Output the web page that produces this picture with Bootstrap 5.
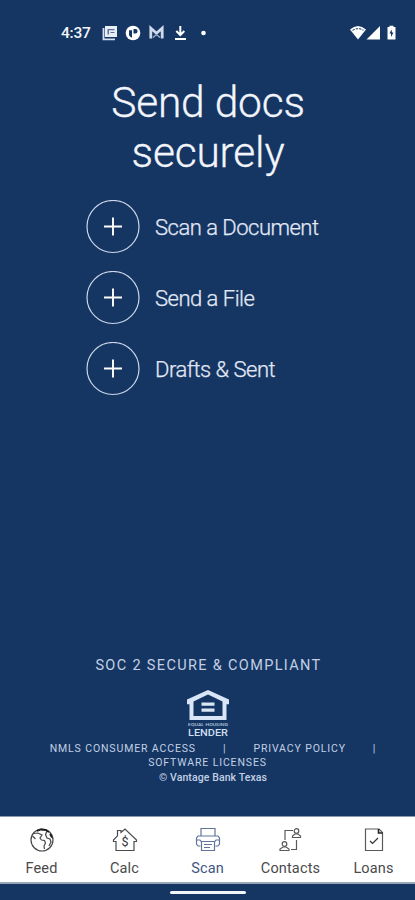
<!DOCTYPE html>
<html lang="en">
<head>
<meta charset="utf-8">
<meta name="viewport" content="width=device-width, initial-scale=1">
<title>Send docs securely</title>
<link href="https://cdn.jsdelivr.net/npm/bootstrap@5.3.0/dist/css/bootstrap.min.css" rel="stylesheet">
<style>
body{font-family:Roboto,"Liberation Sans",sans-serif;background:#153663;color:#f3f5fb;height:900px;overflow:hidden}
svg{display:block;flex:none}
.status{height:64px;padding:1px 18px 0 61px}
.clock{font-size:15.5px;font-weight:500;line-height:20px;width:41px;white-space:nowrap;letter-spacing:-.2px}
.headline{font-size:42.5px;font-weight:300;line-height:50px;margin-top:14px;letter-spacing:-.2px;padding-left:1px;-webkit-text-stroke:.3px #f3f5fb}
.actions{gap:17px;margin:22px 0 0 86px}
.action{gap:15px;color:#e3e8f5;font-size:22px;font-weight:300;line-height:26px;letter-spacing:-.5px}
.action span{padding-top:2px;-webkit-text-stroke:.25px #e3e8f5}
.soc{font-size:14.5px;letter-spacing:1.35px;line-height:18px;color:#c3d0e3;padding-left:2px}
.legal{font-size:10.5px;line-height:14.5px;letter-spacing:.87px;color:#c3d0e3;margin-top:5px}
.legal a{color:inherit}
.links{padding-left:11px}
.sep{padding:0 27px}
.sep-end{padding-left:27px}
.legal .copy{letter-spacing:.1px;padding-left:11px;font-weight:500}
.foot{padding-bottom:31px}
.lender{margin-top:15px}
.tabs{height:68px;background:#fff;border-top:1px solid #8a97b5;border-bottom:2px solid #9aa6ba}
.tab{font-size:14.5px;line-height:18px;color:#4a4a4c;padding-top:10px;gap:7px;letter-spacing:.15px}
.tab.current{color:#405683}
.homebar{height:16px}
.pill{width:76px;height:3px;background:#f2f5fa}
</style>
<script src="https://cdn.jsdelivr.net/npm/bootstrap@5.3.0/dist/js/bootstrap.bundle.min.js"></script>
</head>
<body class="d-flex flex-column m-0">
<header class="status d-flex align-items-center">
  <span class="clock">4:37</span>
  <svg width="105" height="16" viewBox="0 0 105 16">
    <path d="M3 1h12v11H3z" fill="#e8edf6"/><path d="M1.500 3v11.300h11.500" fill="none" stroke="#d5deee" stroke-width="1.800"/><path d="M5.500 4h7v1.300h-5.500V9.500h-1.500zM8.500 7h4v1h-4z" fill="#5b719a"/>
    <circle cx="31" cy="8" r="7.300" fill="#fff"/><path d="M27 5.200h3v7.500a5 5 0 0 1-3-2.500zM31.500 4h1.800a2.200 2.200 0 0 1 0 4.600h-1.800z" fill="#153663"/>
    <path d="M48.800 13.500V3.200l5.700 5 5.700-5v10.300" fill="none" stroke="#cfd9ea" stroke-width="2.800"/><path d="M51 12.500l3.500-3 3.500 3" fill="none" stroke="#aab8d2" stroke-width="1.200"/>
    <path d="M78.300 1v8.500M74.300 6l4 4 4-4M73 14h11" fill="none" stroke="#fff" stroke-width="2"/>
    <circle cx="101.500" cy="8" r="2.300" fill="#fff"/>
  </svg>
  <svg class="ms-auto" width="48" height="16" viewBox="0 0 48 16" fill="#fff">
    <path d="M1 4.500Q9-2.500 17 4.500L9 14.500z"/><path d="M3.500 5.500Q9 1.700 14.500 5.500" fill="none" stroke="#4a618e" stroke-width="1.200" stroke-dasharray="2.500 1"/><path d="M17.500 14.500L31 1v13.500zM38.500 2h2V.800h4V2h2v12.500h-8z"/><path d="M42.500 4.500l-2 4H42v3.500l2.500-4.500H43z" fill="#153663"/>
  </svg>
</header>
<main class="flex-grow-1 d-flex flex-column">
  <h1 class="headline text-center mb-0">Send docs<br>securely</h1>
  <div class="actions d-flex flex-column">
    <a class="action d-flex align-items-center text-decoration-none"><svg width="54" height="54" viewBox="0 0 54 54" fill="none" stroke="#cdd6ea"><circle cx="27" cy="26.500" r="26" stroke-width="1.200"/><path d="M18 26.500h18M27 17.500v18" stroke="#fff" stroke-width="1.900"/></svg><span>Scan a Document</span></a>
    <a class="action d-flex align-items-center text-decoration-none"><svg width="54" height="54" viewBox="0 0 54 54" fill="none" stroke="#cdd6ea"><circle cx="27" cy="26.500" r="26" stroke-width="1.200"/><path d="M18 26.500h18M27 17.500v18" stroke="#fff" stroke-width="1.900"/></svg><span>Send a File</span></a>
    <a class="action d-flex align-items-center text-decoration-none"><svg width="54" height="54" viewBox="0 0 54 54" fill="none" stroke="#cdd6ea"><circle cx="27" cy="26.500" r="26" stroke-width="1.200"/><path d="M18 26.500h18M27 17.500v18" stroke="#fff" stroke-width="1.900"/></svg><span>Drafts &amp; Sent</span></a>
  </div>
  <footer class="foot mt-auto d-flex flex-column align-items-center">
    <div class="soc">SOC 2 SECURE &amp; COMPLIANT</div>
    <svg class="lender" width="42" height="47" viewBox="0 0 42 47" role="img">
      <path d="M21 0L0 9.500v4.700h2.500V30h37V14.200H42V9.500zM21 4.500l14.500 7V26h-29V11.500z" fill="#d8e6f5" fill-rule="evenodd"/>
      <path d="M14.500 12.500h13v3.200h-13zM14.500 18.500h13v3.200h-13z" fill="#d8e6f5"/>
      <text x="1" y="35.500" font-size="4.300" font-weight="500" textLength="40" lengthAdjust="spacingAndGlyphs" fill="#b4c6dd">EQUAL HOUSING</text>
      <text x="1" y="45.500" font-size="9.500" font-weight="500" textLength="40" lengthAdjust="spacingAndGlyphs" fill="#d0dfef">LENDER</text>
    </svg>
    <div class="legal text-center">
      <div class="links d-flex justify-content-center"><a class="text-decoration-none">NMLS CONSUMER ACCESS</a><span class="sep">|</span><a class="text-decoration-none">PRIVACY POLICY</a><span class="sep-end">|</span></div>
      <div><a class="text-decoration-none">SOFTWARE LICENSES</a></div>
      <div class="copy">© Vantage Bank Texas</div>
    </div>
  </footer>
</main>
<nav class="tabs d-flex">
  <a class="tab col d-flex flex-column align-items-center text-decoration-none">
    <svg width="26" height="26" viewBox="0 0 26 26" fill="none" stroke="#48484a" stroke-width="1.200"><circle cx="13" cy="13" r="11"/><path d="M4.500 6.500L9 6l4 2-2 3 1.500 2 3 .5 1 2.500-1.500 3 .5 3M3.500 9l3 3M18 4l-1.500 3.500L18 11l3 1 1 3-2 4"/><path d="M8 4l4-1.500 5 .5 3 2M21 7l2 3.500" stroke="#1d1d1f" stroke-width="1.800"/></svg><span>Feed</span></a>
  <a class="tab col d-flex flex-column align-items-center text-decoration-none">
    <svg width="26" height="26" viewBox="0 0 26 26" fill="none" stroke="#4b4b4d" stroke-width="1.200"><path d="M4 14.500v9h18v-9h2.500V13L13 2 9 5.500V3.500H5.500v5.300L1.500 13v1.500z"/><text x="13" y="18.500" text-anchor="middle" font-size="12.500" fill="#333" stroke="none">$</text></svg><span>Calc</span></a>
  <a class="tab current col d-flex flex-column align-items-center text-decoration-none" aria-current="page">
    <svg width="26" height="26" viewBox="0 0 26 26" fill="none" stroke="#60749c" stroke-width="1.200"><path d="M6 9V1.500h14V9M5.500 19H3l-1.500-2v-6L3 9h20l1.500 2v6L23 19h-2.500M2 13h3l1.500 2v8.500h13V15l1.500-2h3M6.500 14.500h13M9 17.500h8M9 20.500h6"/></svg><span>Scan</span></a>
  <a class="tab col d-flex flex-column align-items-center text-decoration-none">
    <svg width="26" height="26" viewBox="0 0 26 26" fill="none" stroke="#5a5a5c" stroke-width="1.200"><path d="M7 13V3.500h8M18.500 13v9.500H13"/><circle cx="18.500" cy="4" r="2.300"/><path d="M14.500 10.500V9L17 7h3l2.500 2v1.500z"/><circle cx="6.500" cy="17" r="2.300"/><path d="M2 23.500V22l3-2h3l3 2v1.500z"/></svg><span>Contacts</span></a>
  <a class="tab col d-flex flex-column align-items-center text-decoration-none">
    <svg width="26" height="26" viewBox="0 0 26 26" fill="none" stroke="#5a5a5c" stroke-width="1.200"><path d="M4.500 2h13.500l3.500 3.500V23.500h-17z"/><path d="M17.500 2v4h4" stroke="#222" stroke-width="1.600"/><path d="M9 14l2.500 2.500 5.500-5.500" stroke="#333"/></svg><span>Loans</span></a>
</nav>
<div class="homebar d-flex justify-content-center align-items-center"><div class="pill rounded-pill"></div></div>
</body>
</html>
